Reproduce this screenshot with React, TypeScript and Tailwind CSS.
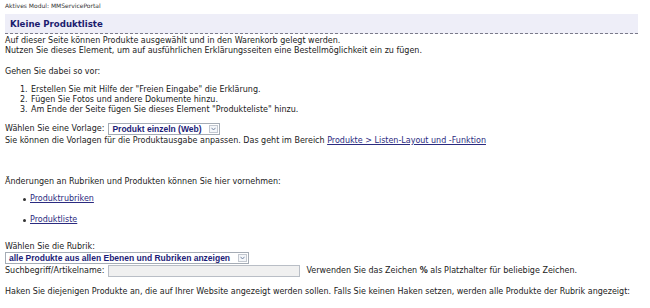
import { ReactNode } from "react";

function FakeSelect({ label, width }: { label: string; width: string }) {
  return (
    <div className={`flex h-[12px] items-stretch border border-[#a5acb5] bg-white ${width}`}>
      <span
        className="flex-1 truncate pl-[3px] text-[8.5px] font-bold leading-[10px] text-[#1c1c78]"
        style={{ fontFamily: '"Liberation Sans", Arial, sans-serif' }}
      >
        {label}
      </span>
      <span className="m-[1px] flex w-[9px] items-center justify-center border border-[#c3c8d0] bg-[#f4f6f9]">
        <svg width="5" height="4" viewBox="0 0 5 4">
          <path d="M0.5 0.8 L2.5 3 L4.5 0.8" fill="none" stroke="#6a7a9a" strokeWidth="0.9" />
        </svg>
      </span>
    </div>
  );
}

function Link({ children }: { children: ReactNode }) {
  return <span className="text-[#2b2b80] underline decoration-[#2b2b80]">{children}</span>;
}

export default function App() {
  return (
    <div
      className="h-[308px] w-[650px] overflow-hidden bg-white px-[5px] text-[8px] leading-[10px] text-[#222]"
      style={{ fontFamily: '"DejaVu Sans", Verdana, sans-serif' }}
    >
      <div className="h-[14px] pt-[2px] text-[6px] leading-[7px] text-[#333]">Aktives Modul: MMServicePortal</div>

      <div className="flex h-[20px] w-[633px] items-center border-b border-dashed border-[#7a7a8a] bg-[#eeeef8] pl-[5px]">
        <span className="text-[8.6px] font-bold text-[#1c1c6e]">Kleine Produktliste</span>
      </div>

      <p className="mt-[2px]">Auf dieser Seite können Produkte ausgewählt und in den Warenkorb gelegt werden.</p>
      <p>Nutzen Sie dieses Element, um auf ausführlichen Erklärungsseiten eine Bestellmöglichkeit ein zu fügen.</p>

      <p className="mt-[11px]">Gehen Sie dabei so vor:</p>
      <ol className="mt-[8px] flex flex-col">
        {[
          'Erstellen Sie mit Hilfe der "Freien Eingabe" die Erklärung.',
          "Fügen Sie Fotos und andere Dokumente hinzu.",
          'Am Ende der Seite fügen Sie dieses Element "Produkteliste" hinzu.',
        ].map((t, i) => (
          <li key={i} className="flex">
            <span className="w-[26px] pl-[15px]">{i + 1}.</span>
            <span>{t}</span>
          </li>
        ))}
      </ol>

      <div className="mt-[8px] flex h-[12px] items-center gap-[4px]">
        <span>Wählen Sie eine Vorlage:</span>
        <FakeSelect label="Produkt einzeln (Web)" width="w-[112px]" />
      </div>
      <p className="mt-[1px]">
        Sie können die Vorlagen für die Produktausgabe anpassen. Das geht im Bereich{" "}
        <Link>Produkte &gt; Listen-Layout und -Funktion</Link>
      </p>

      <p className="mt-[31px]">Änderungen an Rubriken und Produkten können Sie hier vornehmen:</p>
      <ul className="mt-[7px] flex flex-col gap-[11px]">
        {["Produktrubriken", "Produktliste"].map((t) => (
          <li key={t} className="flex items-center">
            <span className="ml-[18px] mr-[4px] h-[3px] w-[3px] rounded-full bg-[#333]" />
            <Link>{t}</Link>
          </li>
        ))}
      </ul>

      <p className="mt-[17px]">Wählen Sie die Rubrik:</p>
      <FakeSelect label="alle Produkte aus allen Ebenen und Rubriken anzeigen" width="w-[244px]" />
      <div className="flex h-[13px] items-center">
        <span className="mr-[4px]">Suchbegriff/Artikelname:</span>
        <span className="h-[12px] w-[192px] border border-[#b9bec6] bg-[#f0f0f0]" />
        <span className="ml-[6px]">
          Verwenden Sie das Zeichen <b>%</b> als Platzhalter für beliebige Zeichen.
        </span>
      </div>

      <p className="mt-[10px] whitespace-nowrap">
        Haken Sie diejenigen Produkte an, die auf Ihrer Website angezeigt werden sollen. Falls Sie keinen Haken setzen, werden alle Produkte der Rubrik angezeigt:
      </p>
    </div>
  );
}
